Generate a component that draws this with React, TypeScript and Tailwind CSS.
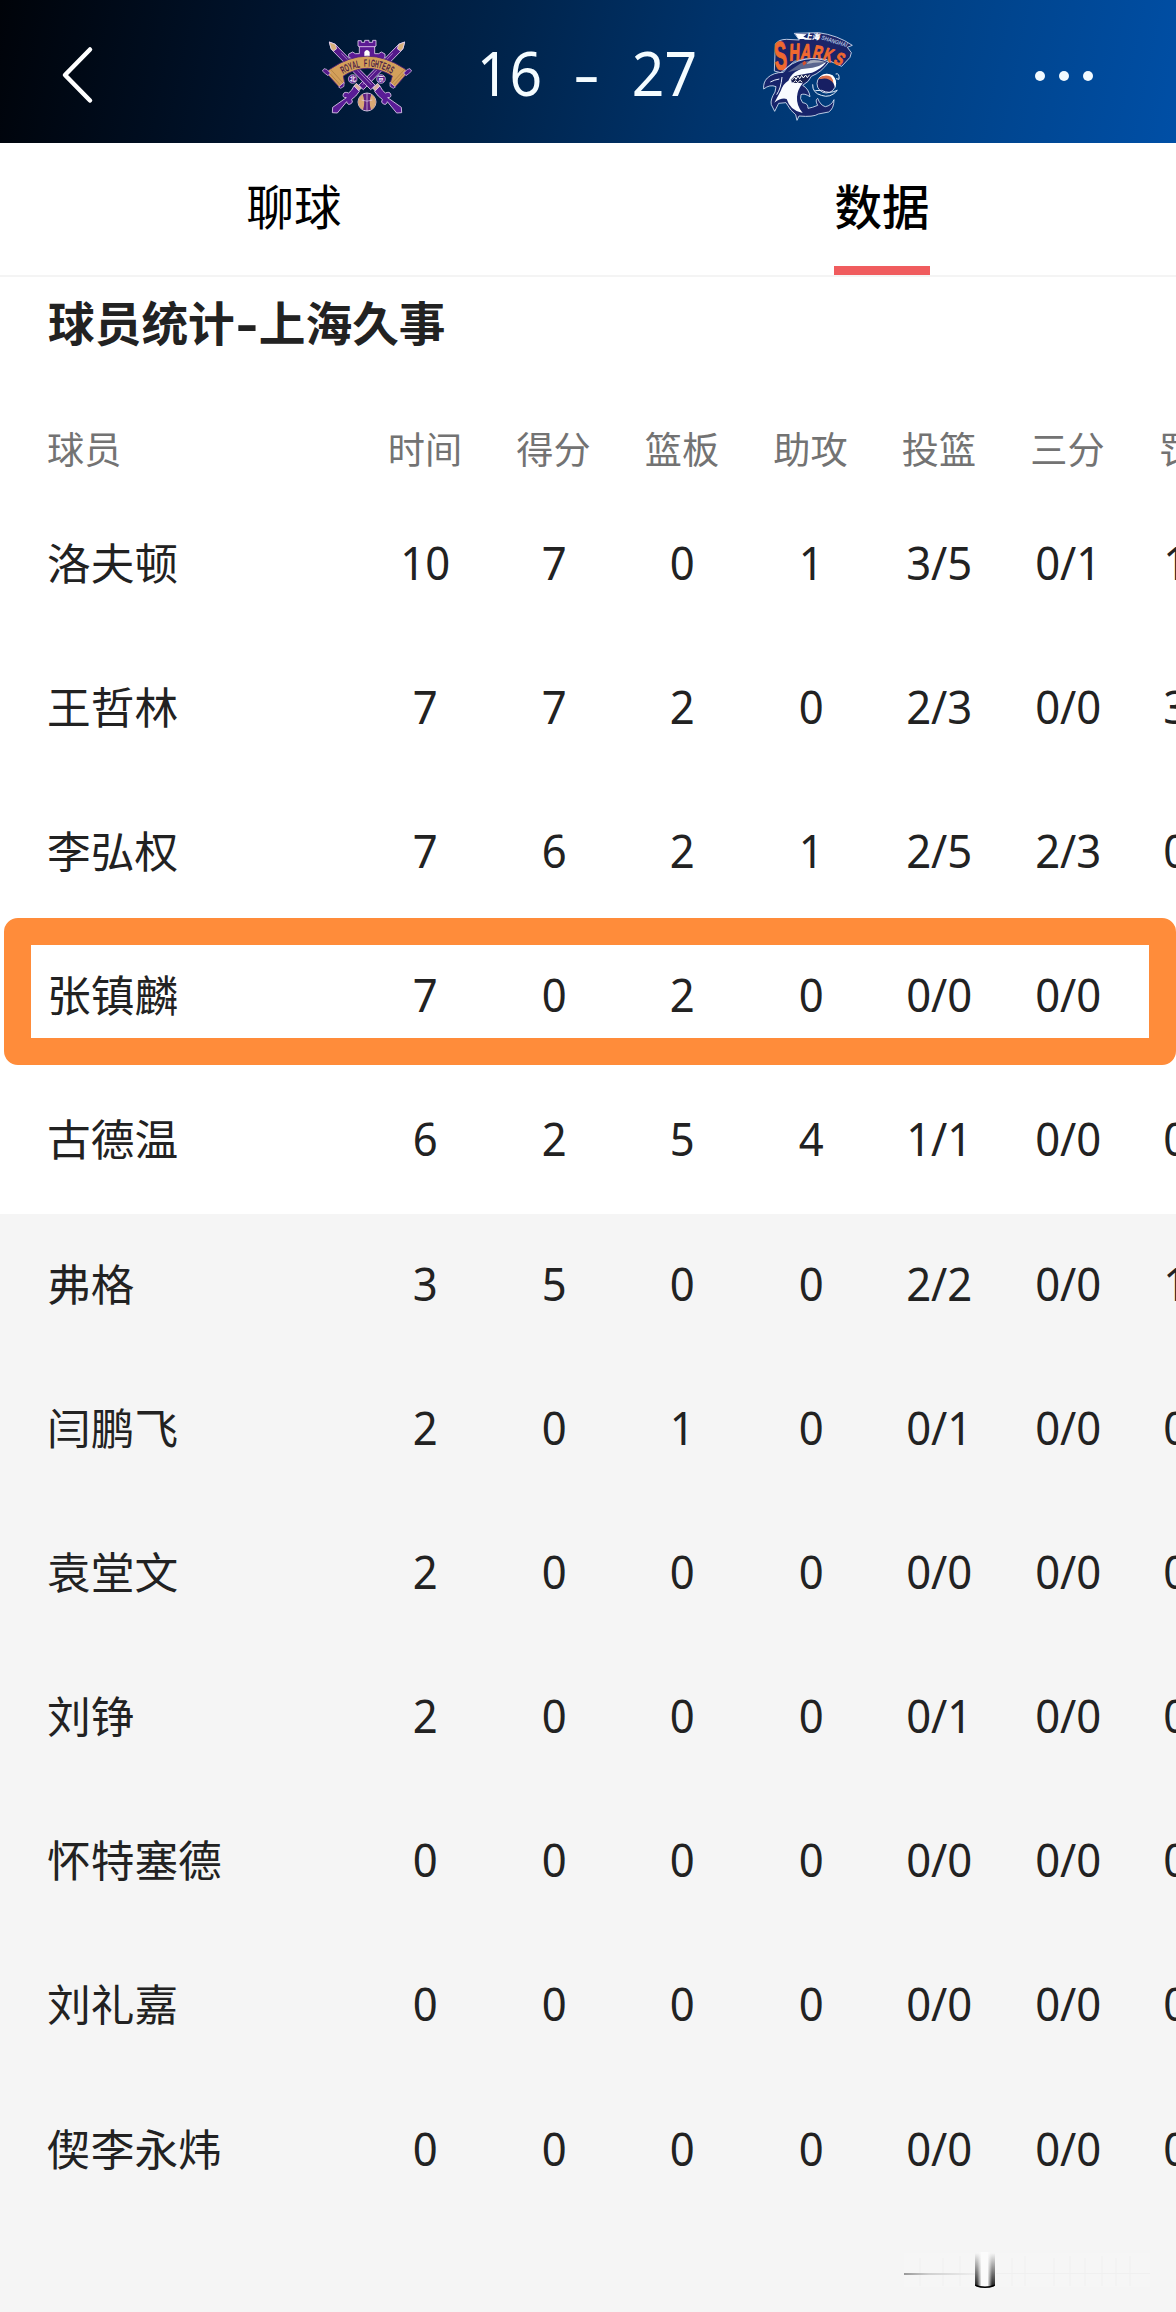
const columns = ["时间", "得分", "篮板", "助攻", "投篮", "三分", "罚球"];

type Player = { name: string; stats: string[]; bench?: boolean; marked?: boolean };

const players: Player[] = [
  { name: "洛夫顿", stats: ["10", "7", "0", "1", "3/5", "0/1", "1/1"] },
  { name: "王哲林", stats: ["7", "7", "2", "0", "2/3", "0/0", "3/3"] },
  { name: "李弘权", stats: ["7", "6", "2", "1", "2/5", "2/3", "0/0"] },
  { name: "张镇麟", stats: ["7", "0", "2", "0", "0/0", "0/0", "0/0"], marked: true },
  { name: "古德温", stats: ["6", "2", "5", "4", "1/1", "0/0", "0/0"] },
  { name: "弗格", stats: ["3", "5", "0", "0", "2/2", "0/0", "1/1"], bench: true },
  { name: "闫鹏飞", stats: ["2", "0", "1", "0", "0/1", "0/0", "0/0"], bench: true },
  { name: "袁堂文", stats: ["2", "0", "0", "0", "0/0", "0/0", "0/0"], bench: true },
  { name: "刘铮", stats: ["2", "0", "0", "0", "0/1", "0/0", "0/0"], bench: true },
  { name: "怀特塞德", stats: ["0", "0", "0", "0", "0/0", "0/0", "0/0"], bench: true },
  { name: "刘礼嘉", stats: ["0", "0", "0", "0", "0/0", "0/0", "0/0"], bench: true },
  { name: "偰李永炜", stats: ["0", "0", "0", "0", "0/0", "0/0", "0/0"], bench: true },
];

function Sword() {
  return (
    <g stroke="#e6d3f0" strokeWidth="2.5" strokeLinejoin="round">
      <path d="M88 66 L106 73 L226 196 L212 209 L94 88 Z" fill="#54198a" />
      <path d="M88 66 L106 73 L110 86 L101 93 L93 86 Z" fill="#d9b27a" />
      <path d="M124 100 L214 194" stroke="#c9a6df" strokeWidth="2" />
      <path d="M218 204 L233 190 L240 198 L226 213 Z" fill="#d8b0a0" />
      <path d="M224 214 L240 198 Q246 212 256 219 Q269 214 272 222 Q276 233 263 233 L304 262 L305 278 L290 279 L262 245 Q260 256 250 252 Q241 247 247 238 Q234 230 224 214 Z" fill="#5a1c96" />
    </g>
  );
}

function RoyalFightersLogo() {
  return (
    <svg className="h-[110px] w-[130px] shrink-0" viewBox="0 0 390 330" aria-label="Royal Fighters">
      <g transform="matrix(-1 0 0 1 402 0)">
        <Sword />
      </g>
      <Sword />
      <path
        d="M146 110 V102 L158 96 L166 101 L178 101 V81 L174 78 V62 H184 V67 H194 V61 H207 V67 H218 V61 H228 V78 L224 81 V101 L236 101 L244 96 L255 102 V112 L240 125 H164 Z"
        fill="#5c1a94"
        stroke="#e6d3f0"
        strokeWidth="2.5"
      />
      <path d="M177 80 H225" stroke="#ead9f2" strokeWidth="2.5" />
      <path d="M193 120 V96 Q201 84 209 96 V120 Z" fill="#fff" />
      <path d="M91 147 Q201 70 315 147 L323 158 L285 202 L270 191 L277 168 Q202 122 130 168 L134 190 L119 203 L77 157 Z" fill="#d3a05a" stroke="#54207a" strokeWidth="2.5" />
      <path d="M91 147 L130 190 M315 147 L275 190 M84 154 L123 197 M319 153 L280 197" fill="none" stroke="#a5753f" strokeWidth="2" />
      <g fill="#54198a" stroke="#e6d3f0" strokeWidth="2">
        <path d="M67 153 L72 146 L80 148 L91 159 L84 167 L76 161 Z" />
        <path d="M335 153 L330 146 L322 148 L311 159 L318 167 L326 161 Z" />
        <path d="M116 201 L132 187 L132 199 L122 205 Z" />
        <path d="M286 201 L270 187 L270 199 L280 205 Z" />
      </g>
      {/* Condensed lettering: a tall face squeezed horizontally along the ribbon */}
      <g fill="#4d1c46" fontSize="32" fontWeight="700" textAnchor="middle" className="font-['Liberation_Sans']">
        {Array.from("ROYAL FIGHTERS").map((letter, i) => {
          const t = (i - 6.5) / 6.5;
          return (
            <text key={i} transform={`translate(${202 + t * 68} ${140 + t * t * 19}) rotate(${t * 29}) scale(0.5 1)`}>
              {letter}
            </text>
          );
        })}
      </g>
      <g fill="#54198a" stroke="#e6d3f0" strokeWidth="2">
        <circle cx="158" cy="177" r="13" />
        <circle cx="243" cy="177" r="13" />
      </g>
      <g fill="#f6eafa" fontSize="18" fontWeight="700" textAnchor="middle" className="font-['Noto_Sans_CJK_SC']">
        <text x="158" y="184">北</text>
        <text x="243" y="184">京</text>
      </g>
      <circle cx="201" cy="246" r="27" fill="#612080" stroke="#eadcf2" strokeWidth="2.5" />
      <path d="M180 230 Q191 246 181 263 Q168 246 180 230 Z M222 230 Q211 246 221 263 Q234 246 222 230 Z M188 223 Q197 246 189 269 L180 263 Q189 246 180 230 Z M214 223 Q205 246 213 269 L222 263 Q213 246 222 230 Z" fill="#d9a875" />
      <path d="M201 219 V273 M185 240 Q201 247 217 240" fill="none" stroke="#e7d2ef" strokeWidth="2" />
    </svg>
  );
}

function SharksLogo() {
  return (
    <svg className="h-[110px] w-[120px] shrink-0" viewBox="0 0 360 330" aria-label="Shanghai Sharks">
      <path
        d="M73 153 L76 72 Q86 58 110 58 L148 60 L133 40 L205 38 Q262 45 307 76 L292 82 L304 98 L300 112 L275 139 L228 118 Q180 110 133 124 L92 158 Z"
        fill="#1b2468"
        stroke="#dbe6f6"
        strokeWidth="2.5"
        strokeLinejoin="round"
      />
      <path d="M136 41 L170 43 L160 50 L178 57 L146 57 Z" fill="#fff" />
      <text x="162" y="58" fill="#fff" fontSize="23" fontWeight="900" fontStyle="italic" className="font-['Noto_Sans_CJK_SC']" transform="rotate(1 162 58)">
        上海
      </text>
      <text x="213" y="58" fill="#a9bdde" fontSize="18" fontWeight="700" fontStyle="italic" textLength="80" lengthAdjust="spacingAndGlyphs" transform="rotate(17 213 58)" className="font-['Liberation_Sans']">
        SHANGHAI
      </text>
      <g fill="#f0692f" stroke="#f0692f" strokeWidth="3" strokeLinejoin="round" fontWeight="900" className="font-['Liberation_Sans']">
        <text transform="translate(76 149) rotate(-4) scale(.54 1.14)" fontSize="104">S</text>
        <text transform="translate(118 122) rotate(-4) skewX(-6) scale(.66 1.08)" fontSize="66">H</text>
        <text transform="translate(151 117) rotate(3) skewX(-6) scale(.66 1.06)" fontSize="62">A</text>
        <text transform="translate(185 116) rotate(9) skewX(-6) scale(.66 1.04)" fontSize="58">R</text>
        <text transform="translate(216 120) rotate(15) skewX(-6) scale(.66 1.02)" fontSize="56">K</text>
        <text transform="translate(248 128) rotate(23) skewX(-6) scale(.72 1)" fontSize="54">S</text>
      </g>
      <path
        d="M236 126 Q205 111 165 118 Q120 126 100 157 Q70 157 52 174 Q39 187 41 207 Q60 192 78 200 L75 216 Q60 239 64 254 L74 274 L86 250 L108 248 Q122 274 137 284 L141 301 L147 288 Q190 292 205 282 L236 276 Q252 266 252 239 Q244 257 226 260 Q211 256 203 235 Q194 240 203 256 Q187 263 174 265 Q175 250 158 248 Q148 236 153 224 Q163 219 180 230 Q177 207 158 196 Q178 185 184 169 Q214 157 236 126 Z"
        fill="#17246b"
        stroke="#dce9f8"
        strokeWidth="2.5"
        strokeLinejoin="round"
      />
      <path d="M229 127 Q182 132 148 149 Q123 160 115 182 Q100 190 92 213 L73 248 Q94 232 110 237 Q120 272 158 279 Q139 256 141 230 Q143 208 158 190 L124 187 L127 177 Q147 163 186 158 Q213 148 229 127 Z" fill="#f8fbff" />
      <path d="M229 126 Q187 116 153 129 L113 157 Q151 145 188 143 Q210 139 229 126 Z" fill="#5b668f" />
      <path d="M226 127 Q203 118 181 121 L168 132 Q194 126 226 127 Z" fill="#a9aebd" />
      <path d="M157 128 L164 122 L170 129 L161 137 Z" fill="#d5502c" />
      <path d="M122 179 L133 169 L151 164 L181 163 L174 177 L160 188 L131 189 Z" fill="#1a2150" />
      <path d="M125 180 L134 171 L138 178 L144 168 L149 176 L155 166 L160 174 L167 165 L172 173 L179 164 M130 188 L137 182 L143 188 L150 181 L157 187" fill="none" stroke="#fff" strokeWidth="3" />
      <path d="M88 177 Q74 179 61 186 M96 171 Q93 205 80 224" fill="none" stroke="#e6f0fb" strokeWidth="3" />
      <circle cx="229" cy="191" r="28" fill="#171f63" stroke="#e0ebf8" strokeWidth="2.5" />
      <path d="M205 176 Q224 153 248 166 Q263 181 256 203 Q247 175 226 169 Q214 168 205 176 Z" fill="#fff" />
      <path d="M205 176 Q223 160 243 170 Q251 180 250 189 Q235 171 213 177 Z" fill="#db704b" />
      <path d="M188 193 Q187 219 214 226 Q241 236 262 211 Q236 223 215 211 L196 212 M257 162 Q269 158 267 178 L258 176" fill="none" stroke="#e2ecf9" strokeWidth="3" />
    </svg>
  );
}

function Header() {
  return (
    <header className="flex h-[143px] items-start bg-[linear-gradient(102deg,#000309_0%,#00132c_22%,#00234a_42%,#00336b_60%,#004186_78%,#004fa6_100%)]">
      <div className="flex h-[143px] w-[300px] shrink-0 pt-[45px] pl-[58px]">
        <svg className="h-[60px] w-[38px]" viewBox="0 0 38 60" fill="none" stroke="#fff" strokeWidth="4.5" strokeLinecap="round" strokeLinejoin="round">
          <path d="M32 4.500 L7 30 L32 55.500" />
        </svg>
      </div>
      <div className="mt-5">
        <RoyalFightersLogo />
      </div>
      <div className="mt-[28px] flex h-[88px] w-[320px] shrink-0 items-center justify-center pr-[7px] text-[62px] leading-[88px] text-[#f4fcff]">
        <span className="w-[70px] scale-x-[0.92] text-center">16</span>
        <span className="w-[85px] scale-x-[1.35] text-center">-</span>
        <span className="w-[70px] scale-x-[0.92] text-center">27</span>
      </div>
      <div className="mt-5">
        <SharksLogo />
      </div>
      <div className="mt-[71px] ml-[165px] flex gap-[14px]">
        <i className="size-[10px] rounded-full bg-[#f2faff]" />
        <i className="size-[10px] rounded-full bg-[#f2faff]" />
        <i className="size-[10px] rounded-full bg-[#f2faff]" />
      </div>
    </header>
  );
}

function Tabs() {
  return (
    <nav className="flex h-[134px] border-b-2 border-[#f4f4f4] text-[47.500px] leading-[127px] text-black">
      <div className="flex w-1/2 justify-center">聊球</div>
      <div className="flex w-1/2 justify-center">
        <span className="h-[132px] w-[96px] border-b-[9px] border-[#f05c5e] text-center font-medium">数据</span>
      </div>
    </nav>
  );
}

function PlayerRow({ player }: { player: Player }) {
  return (
    <div
      className={`relative grid h-[144.2px] grid-cols-[314px_repeat(7,128.500px)] items-center pb-[5px] pl-[47px] text-[45px] leading-[60px] text-[#222] ${player.bench ? "bg-[#f5f5f5]" : "bg-white"}`}
    >
      <span className="text-[43.700px]">{player.name}</span>
      {player.stats.map((value, i) => (
        <span key={i} className="scale-x-[0.97] text-center">
          {value}
        </span>
      ))}
      {player.marked && (
        <div className="absolute top-[-8px] left-1 h-[147px] w-[1172px] rounded-[14px] border-[27px] border-[#ff8c3a]" />
      )}
    </div>
  );
}

function FadedMark() {
  return (
    <svg className="absolute top-[2250px] left-[900px] h-[42px] w-[260px]" viewBox="0 0 260 42">
      <defs>
        <linearGradient id="lineFade" x1="0" x2="1" y1="0" y2="0">
          <stop offset="0" stopColor="#999" />
          <stop offset="0.35" stopColor="#d0d0d0" />
          <stop offset="1" stopColor="#eee" />
        </linearGradient>
        <linearGradient id="barFade" x1="0" x2="0" y1="0" y2="1">
          <stop offset="0" stopColor="#222" stopOpacity="0" />
          <stop offset="1" stopColor="#222" />
        </linearGradient>
        <linearGradient id="coreFade" x1="0" x2="1" y1="0" y2="0">
          <stop offset="0" stopColor="#f5f5f5" stopOpacity="0" />
          <stop offset="0.3" stopColor="#fbfbfb" />
          <stop offset="0.7" stopColor="#fbfbfb" />
          <stop offset="1" stopColor="#f5f5f5" stopOpacity="0" />
        </linearGradient>
      </defs>
      <rect x="4" y="3" width="246" height="34" fill="#f6f6f6" />
      <path d="M20 8V36M43 8V36M60 6V36M112 8V36M125 6V36M154 8V36M170 6V36M185 8V36M202 6V36M216 8V36M230 6V36" stroke="#f3f3f3" strokeWidth="2" />
      <rect x="4" y="23" width="71" height="2" fill="url(#lineFade)" />
      <rect x="96" y="23" width="154" height="1" fill="#f0f0f0" />
      <rect x="75" y="3" width="20" height="33" fill="url(#barFade)" />
      <rect x="77" y="2" width="15" height="34" fill="url(#coreFade)" />
      <path d="M75 34.500 Q85 38.500 95 34.500 L94 36.500 Q85 39.500 76 36.500 Z" fill="#000" />
    </svg>
  );
}

export default function App() {
  return (
    <div className="relative h-[2312px] w-[1176px] overflow-hidden bg-[#f5f5f5] font-['Noto_Sans','Noto_Sans_CJK_SC',sans-serif]">
      <Header />
      <div className="bg-white">
        <Tabs />
        <h1 className="h-[93px] pt-[16px] pl-12 text-[46.700px] leading-[60px] font-bold text-[#222]">
          球员统计<span className="inline-block w-[24px] scale-x-140 text-center">-</span>上海久事
        </h1>
        <div className="grid h-[123px] grid-cols-[313.700px_repeat(7,128.500px)] pt-[50px] pl-[47px] text-[37.200px] leading-[60px] text-[#737373]">
          <span>球员</span>
          {columns.map((label) => (
            <span key={label} className="text-center whitespace-nowrap">
              {label}
            </span>
          ))}
        </div>
      </div>
      {players.map((player) => (
        <PlayerRow key={player.name} player={player} />
      ))}
      <FadedMark />
    </div>
  );
}
